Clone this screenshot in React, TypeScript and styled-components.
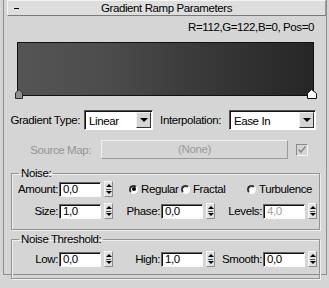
import styled, { createGlobalStyle } from 'styled-components'

// ─── Global ─────────────────────────────────────────────────────

const GlobalStyle = createGlobalStyle`
  html, body {
    margin: 0;
    padding: 0;
    background: #d5d5d5;
  }
  body {
    font-family: "Liberation Sans", Arial, sans-serif;
    font-size: 11.5px;
    letter-spacing: -0.4px;
    color: #000;
  }
`

// ─── Styled Components ──────────────────────────────────────────

const Page = styled.div`
  width: 329px;
  height: 288px;
  box-sizing: border-box;
  padding: 10px 2px 0 3px;
  overflow: hidden;
`

const Rollout = styled.div`
  height: 275px;
  box-sizing: border-box;
  border: 1px solid #8e8e8e;
  border-top: none;
`

const TitleBar = styled.div`
  position: relative;
  margin: -10px 0 0 3px;
  height: 16px;
  box-sizing: border-box;
  background: #dedede;
  border-top: 1px solid #f4f4f4;
  border-left: 1px solid #f4f4f4;
  border-bottom: 1px solid #7a7a7a;
  border-right: 1px solid #9a9a9a;
  display: flex;
  align-items: center;
  justify-content: center;
  line-height: 14px;
`

const Collapse = styled.span`
  position: absolute;
  left: 6px;
  top: 7px;
  width: 5px;
  height: 1px;
  background: #000;
`

const ColorInfo = styled.div`
  margin-top: 4px;
  padding-right: 12px;
  text-align: right;
  line-height: 14px;
`

const GradientBar = styled.div`
  position: relative;
  margin: 8px 0 0 13px;
  width: 297px;
  height: 54px;
  box-sizing: border-box;
  border: 1px solid #111;
  background: linear-gradient(to right, #555 0%, #4c4c4c 30%, #3a3a3a 60%, #262626 100%);
`

const Flag = styled.svg<{ $side: 'left' | 'right' }>`
  position: absolute;
  bottom: -4px;
  ${({ $side }) => ($side === 'left' ? 'left: -3px;' : 'right: -4px;')}
`

const Row = styled.div<{ $top: number }>`
  display: flex;
  align-items: center;
  margin-top: ${({ $top }) => $top}px;
`

const Label = styled.span<{ $w: number; $gap?: number; $disabled?: boolean }>`
  width: ${({ $w }) => $w}px;
  margin-right: ${({ $gap }) => $gap ?? 0}px;
  flex-shrink: 0;
  text-align: right;
  white-space: nowrap;
  line-height: 14px;
  color: ${({ $disabled }) => ($disabled ? '#939393' : '#000')};
`

const SelectBox = styled.div<{ $w: number }>`
  width: ${({ $w }) => $w}px;
  height: 20px;
  box-sizing: border-box;
  display: flex;
  align-items: stretch;
  background: #fff;
  border-top: 1px solid #555;
  border-left: 1px solid #555;
  border-bottom: 1px solid #fff;
  border-right: 1px solid #fff;
  box-shadow: inset 1px 1px 0 #111;
`

const SelectText = styled.span`
  flex: 1;
  padding: 3px 0 0 4px;
  line-height: 14px;
`

const DropButton = styled.span`
  width: 15px;
  margin: 1px 1px 1px 0;
  box-sizing: border-box;
  background: #d5d5d5;
  border-top: 1px solid #f2f2f2;
  border-left: 1px solid #f2f2f2;
  border-bottom: 1px solid #333;
  border-right: 1px solid #333;
  display: flex;
  align-items: center;
  justify-content: center;

  &::after {
    content: '';
    border-left: 4px solid transparent;
    border-right: 4px solid transparent;
    border-top: 4px solid #000;
  }
`

const MapButton = styled.div`
  width: 187px;
  height: 19px;
  box-sizing: border-box;
  border-top: 1px solid #f0f0f0;
  border-left: 1px solid #f0f0f0;
  border-bottom: 1px solid #9a9a9a;
  border-right: 1px solid #9a9a9a;
  color: #9a9a9a;
  text-align: center;
  line-height: 17px;
`

const CheckBox = styled.span`
  width: 12px;
  height: 12px;
  margin-left: 8px;
  box-sizing: border-box;
  border-top: 1px solid #8a8a8a;
  border-left: 1px solid #8a8a8a;
  border-bottom: 1px solid #f4f4f4;
  border-right: 1px solid #f4f4f4;
  display: flex;
  align-items: center;
  justify-content: center;
`

const Group = styled.fieldset<{ $top: number; $pt: number; $pb: number }>`
  margin: ${({ $top }) => $top}px 0 0 7px;
  width: 309px;
  box-sizing: border-box;
  padding: ${({ $pt, $pb }) => `${$pt}px 0 ${$pb}px 1px`};
  border: 1px solid #939393;
  box-shadow: 1px 1px 0 #f0f0f0, inset 1px 1px 0 #f0f0f0;
  min-inline-size: 0;
`

const Legend = styled.legend`
  margin-left: 6px;
  padding: 0 2px;
  line-height: 14px;
`

const GroupRow = styled.div<{ $gap?: number }>`
  display: flex;
  align-items: center;
  gap: 1px;
  margin-top: ${({ $gap }) => $gap ?? 0}px;
`

const SpinCell = styled.div`
  display: flex;
  align-items: center;
  width: 101px;
`

const Field = styled.div<{ $disabled?: boolean }>`
  width: 42px;
  height: 15px;
  margin-left: 1px;
  box-sizing: border-box;
  background: #fff;
  border-top: 1px solid #666;
  border-left: 1px solid #666;
  border-bottom: 1px solid #fafafa;
  border-right: 1px solid #fafafa;
  box-shadow: inset 1px 1px 0 #111;
  padding-left: 3px;
  line-height: 13px;
  color: ${({ $disabled }) => ($disabled ? '#a0a0a0' : '#000')};
`

const Spinner = styled.div`
  width: 9px;
  height: 16px;
  margin-left: 3px;
  box-sizing: border-box;
  background: #e2e2e2;
  border-top: 1px solid #f6f6f6;
  border-left: 1px solid #f6f6f6;
  border-bottom: 1px solid #8a8a8a;
  border-right: 1px solid #8a8a8a;
  display: flex;
  flex-direction: column;
  align-items: center;
  justify-content: space-between;
  padding: 2px 0;
`

const SpinArrow = styled.span<{ $dir: 'up' | 'down' }>`
  width: 0;
  height: 0;
  border-left: 3px solid transparent;
  border-right: 3px solid transparent;
  ${({ $dir }) => ($dir === 'up' ? 'border-bottom: 3px solid #000;' : 'border-top: 3px solid #000;')}
`

const SpinDivider = styled.span`
  width: 5px;
  height: 1px;
  background: #555;
`

const RadioOption = styled.label<{ $w: number }>`
  display: flex;
  align-items: center;
  gap: 3px;
  width: ${({ $w }) => $w}px;
  flex-shrink: 0;
  line-height: 14px;
  white-space: nowrap;
`

const RadioDot = styled.span<{ $checked?: boolean }>`
  width: 9px;
  height: 9px;
  box-sizing: border-box;
  border-radius: 50%;
  background: #fff;
  border: 2px solid;
  border-color: #333 #fafafa #fafafa #333;
  display: flex;
  align-items: center;
  justify-content: center;

  &::after {
    content: '';
    width: 4px;
    height: 4px;
    border-radius: 50%;
    background: ${({ $checked }) => ($checked ? '#000' : 'transparent')};
  }
`

const Spacer = styled.span<{ $w: number }>`
  width: ${({ $w }) => $w}px;
  flex-shrink: 0;
`

// ─── Parts ──────────────────────────────────────────────────────

const Spin = () => (
  <Spinner>
    <SpinArrow $dir="up" />
    <SpinDivider />
    <SpinArrow $dir="down" />
  </Spinner>
)

const SpinControl = ({ label, value, disabled }: { label: string; value: string; disabled?: boolean }) => (
  <SpinCell>
    <Label $w={45}>{label}</Label>
    <Field $disabled={disabled}>{value}</Field>
    <Spin />
  </SpinCell>
)

const Select = ({ value, width }: { value: string; width: number }) => (
  <SelectBox $w={width}>
    <SelectText>{value}</SelectText>
    <DropButton />
  </SelectBox>
)

// ─── Component ──────────────────────────────────────────────────

export default function App() {
  return (
    <>
      <GlobalStyle />
      <Page>
        <Rollout>
          <TitleBar>
            <Collapse />
            Gradient Ramp Parameters
          </TitleBar>

          <ColorInfo>R=112,G=122,B=0, Pos=0</ColorInfo>

          <GradientBar>
            <Flag $side="left" width="8" height="10" viewBox="0 0 8 10">
              <path d="M0.5 9.5 V4 L4 0.5 L7.5 4 V9.5 Z" fill="#8f8f8f" stroke="#2a2a2a" />
            </Flag>
            <Flag $side="right" width="10" height="10" viewBox="0 0 10 10">
              <path d="M0.5 9.5 V4.5 L4.5 0.5 L9.5 4.5 V9.5 Z" fill="#fff" stroke="#111" />
            </Flag>
          </GradientBar>

          <Row $top={14}>
            <Label $w={76} $gap={4}>Gradient Type:</Label>
            <Select value="Linear" width={69} />
            <Label $w={68} $gap={8}>Interpolation:</Label>
            <Select value="Ease In" width={87} />
          </Row>

          <Row $top={10}>
            <Label $w={87} $gap={10} $disabled>Source Map:</Label>
            <MapButton>(None)</MapButton>
            <CheckBox>
              <svg width="10" height="10" viewBox="0 0 10 10">
                <path d="M1.5 4.5 L4 7 L8.5 1.5" fill="none" stroke="#8a8a8a" strokeWidth="1.6" />
              </svg>
            </CheckBox>
          </Row>

          <Group $top={7} $pt={1} $pb={10}>
            <Legend>Noise:</Legend>
            <GroupRow>
              <SpinControl label="Amount:" value="0,0" />
              <Spacer $w={13} />
              <RadioOption $w={51}>
                <RadioDot $checked />
                Regular
              </RadioOption>
              <RadioOption $w={65}>
                <RadioDot />
                Fractal
              </RadioOption>
              <RadioOption $w={72}>
                <RadioDot />
                Turbulence
              </RadioOption>
            </GroupRow>
            <GroupRow $gap={6}>
              <SpinControl label="Size:" value="1,0" />
              <SpinControl label="Phase:" value="0,0" />
              <SpinControl label="Levels:" value="4,0" disabled />
            </GroupRow>
          </Group>

          <Group $top={2} $pt={5} $pb={11}>
            <Legend>Noise Threshold:</Legend>
            <GroupRow>
              <SpinControl label="Low:" value="0,0" />
              <SpinControl label="High:" value="1,0" />
              <SpinControl label="Smooth:" value="0,0" />
            </GroupRow>
          </Group>
        </Rollout>
      </Page>
    </>
  )
}
